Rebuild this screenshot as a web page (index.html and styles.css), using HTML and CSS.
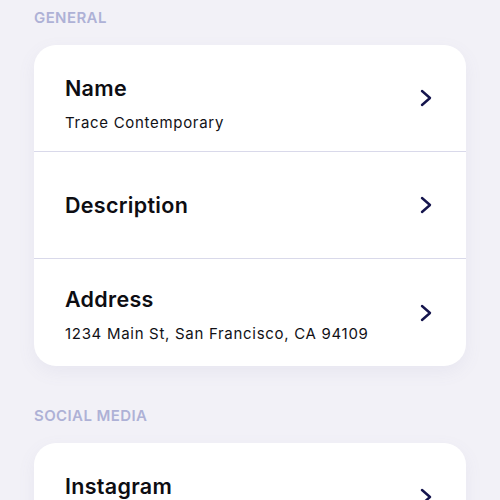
FILE: index.html
```html
<!DOCTYPE html>
<html>
<head>
<meta charset="utf-8">
<link rel="stylesheet" href="styles.css">
</head>
<body>
<div class="page">
  <div class="section-label">GENERAL</div>
  <div class="card">
    <div class="row">
      <div class="text two">
        <div class="title">Name</div>
        <div class="sub">Trace Contemporary</div>
      </div>
      <svg class="chev" viewBox="0 0 12 18"><path d="M2 2 L10 9 L2 16" /></svg>
    </div>
    <div class="row">
      <div class="text">
        <div class="title">Description</div>
      </div>
      <svg class="chev" viewBox="0 0 12 18"><path d="M2 2 L10 9 L2 16" /></svg>
    </div>
    <div class="row">
      <div class="text two raised">
        <div class="title">Address</div>
        <div class="sub">1234 Main St, San Francisco, CA 94109</div>
      </div>
      <svg class="chev" viewBox="0 0 12 18"><path d="M2 2 L10 9 L2 16" /></svg>
    </div>
  </div>
  <div class="section-label">SOCIAL MEDIA</div>
  <div class="card">
    <div class="row">
      <div class="text two">
        <div class="title">Instagram</div>
        <div class="sub">@tracecontemporary</div>
      </div>
      <svg class="chev" viewBox="0 0 12 18"><path d="M2 2 L10 9 L2 16" /></svg>
    </div>
  </div>
</div>
</body>
</html>
```

FILE: styles.css
```css
html, body {
  margin: 0;
  padding: 0;
  background: #f2f1f7;
  height: 100%;
  overflow: hidden;
}
.page {
  padding: 8px 34px 0 34px;
  font-family: "Inter", "Noto Sans", sans-serif;
}
.section-label {
  font-size: 15px;
  line-height: 20px;
  font-weight: 600;
  color: #aeb1d6;
  letter-spacing: 0.4px;
  height: 20px;
  margin-bottom: 17px;
}
.card {
  background: #ffffff;
  border-radius: 22px;
  box-shadow: 0 6px 18px rgba(120, 120, 170, 0.08);
  margin-bottom: 40px;
}
.row {
  display: flex;
  align-items: center;
  justify-content: space-between;
  height: 106px;
  padding: 0 34px 0 31px;
  border-bottom: 1px solid #d9d9ea;
}
.row:last-child {
  border-bottom: none;
  height: 107px;
}
.text {
  display: flex;
  flex-direction: column;
  gap: 13px;
}
.text.two {
  padding-top: 10px;
}
.text.two.raised {
  padding-top: 3px;
}
.title {
  font-size: 21.5px;
  line-height: 26px;
  font-weight: 600;
  letter-spacing: 0.3px;
  color: #0d0d12;
}
.sub {
  font-size: 15px;
  line-height: 18px;
  letter-spacing: 0.7px;
  color: #111116;
}
.chev {
  width: 12px;
  height: 18px;
  fill: none;
  stroke: #15154d;
  stroke-width: 2.4;
  stroke-linecap: round;
  stroke-linejoin: round;
}
```
